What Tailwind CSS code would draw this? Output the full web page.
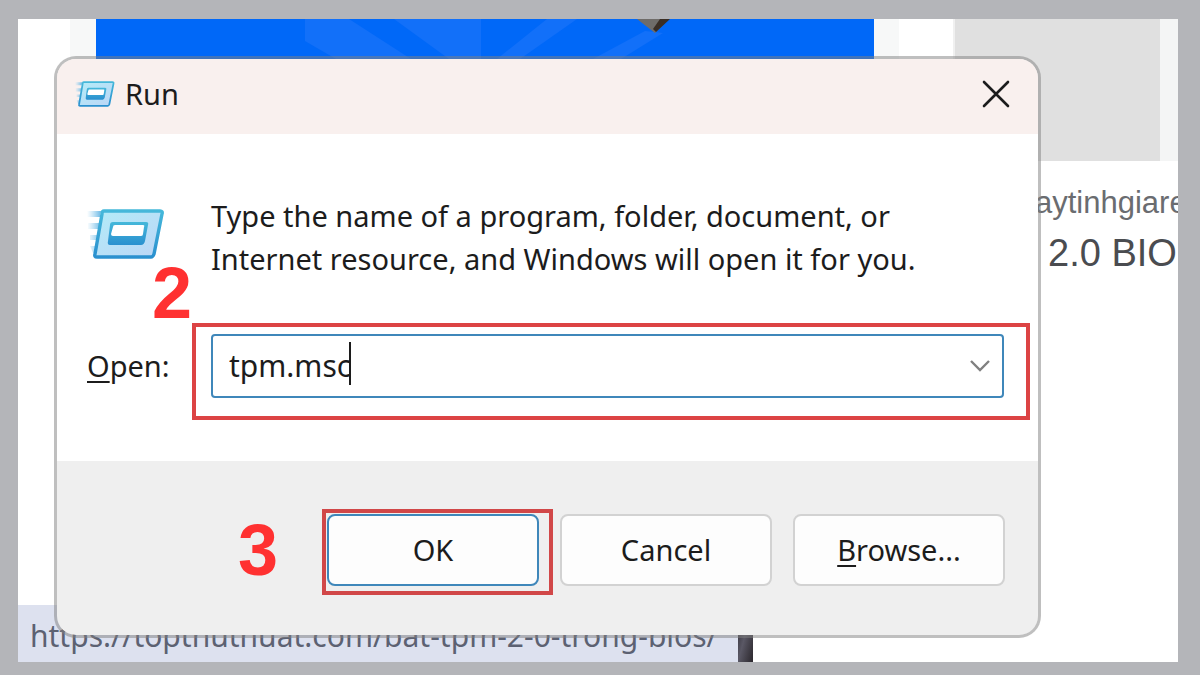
<!DOCTYPE html>
<html lang="en">
<head>
  <meta charset="UTF-8" />
  <meta name="viewport" content="width=device-width, initial-scale=1.0"/>
  <title>Run</title>
  <script src="https://cdn.jsdelivr.net/npm/@tailwindcss/browser@4"></script>
</head>
<body class="flex min-h-screen bg-[#b4b5b9] pt-[19px] pr-[22px] pb-[13px] pl-[18px] font-['Noto_Sans','Open_Sans',sans-serif] text-[#1c1c1c]">

  <div class="relative flex flex-1 overflow-hidden bg-white">

    <!-- Page behind the dialog -->
    <main class="flex-1 pl-[52px] pr-[54px]">
      <div class="h-40 bg-[#f7f8f8] pl-[26px] pr-[25px]">
        <svg class="block h-full w-full bg-[#0068f8]" viewBox="0 0 778 160" preserveAspectRatio="none" aria-hidden="true">
          <path d="M209 0h44l62 40h-75l-31-18z" fill="#1270f9"/>
          <path d="M298 0h87v40h-32z" fill="#1270f9"/>
          <path d="M401 40l50-40h30l-57 40z" fill="#1270f9"/>
          <path d="M497 40l52-28 18 2-42 26z" fill="#1270f9"/>
          <path d="M541 0h32l-14 14z" fill="#6f6c69"/>
          <path d="M564 0h10l-14 13-3-3z" fill="#3a2e25"/>
        </svg>
      </div>
    </main>

    <aside class="w-[225px] font-['Liberation_Sans',Arial,sans-serif]">
      <div class="flex h-[142px]">
        <div class="flex-1 border-l-2 border-[#f0f0f0] bg-[#e0e0e0]"></div>
        <div class="w-[18px] bg-[#f4f5f5]"></div>
      </div>
      <p class="mt-6 pl-[82px] text-[31px] leading-9 whitespace-nowrap text-[#6a6c70]">aytinhgiare</p>
      <p class="mt-3 pl-[95px] text-[38px] leading-10 whitespace-nowrap text-[#4a4c50]">2.0 BIO</p>
    </aside>

    <!-- Link preview -->
    <div class="absolute bottom-0 left-0 flex h-[57px]">
      <div class="w-[720px] bg-[#dde1ef] pt-2 pl-3 text-3xl leading-[45px] whitespace-nowrap text-[#5c6172]">https://topthuthuat.com/bat-tpm-2-0-trong-bios/</div>
      <div class="w-[15px] bg-linear-to-br from-[#25222a] via-[#5a5865] to-[#2b272d]"></div>
    </div>

    <!-- Run dialog -->
    <section role="dialog" aria-labelledby="title" class="absolute top-[37px] right-[137px] left-9 overflow-hidden rounded-[22px] border-3 border-[#808080]/50 bg-[#efefef] bg-clip-padding">
      <header class="flex h-[75px] items-center bg-[#f9f0ee] pr-7 pb-[5px] pl-[18px]">
        <svg class="h-7 w-10" viewBox="0 0 78 52" aria-hidden="true">
          <use href="#run-icon"/>
        </svg>
        <h1 id="title" class="ml-[10px] flex-1 text-[29px]">Run</h1>
        <button type="button" aria-label="Close">
          <svg class="size-7" viewBox="0 0 28 28" fill="none" stroke="#1c1c1c" stroke-width="2.6" stroke-linecap="round">
            <path d="M2 2l24 24M26 2L2 26"/>
          </svg>
        </button>
      </header>

      <div class="relative grid grid-cols-[124px_1fr] gap-y-[54px] bg-white pt-[60px] pr-[34px] pb-[63px] pl-[30px]">
        <svg class="mt-[14px] h-[52px] w-[78px]" viewBox="0 0 78 52" aria-hidden="true">
          <defs>
            <linearGradient id="edge" x1="0" y1="0" x2="0" y2="1">
              <stop offset="0" stop-color="#45b8da"/>
              <stop offset="1" stop-color="#2a90cf"/>
            </linearGradient>
            <linearGradient id="face" x1="0" y1="0" x2="1" y2="1">
              <stop offset="0" stop-color="#b3ecf8"/>
              <stop offset="1" stop-color="#bcd5f6"/>
            </linearGradient>
            <linearGradient id="trail" x1="0" y1="0" x2="1" y2="0">
              <stop offset="0" stop-color="#8fcdf0" stop-opacity="0"/>
              <stop offset="1" stop-color="#6bb8e4"/>
            </linearGradient>
          </defs>
          <g id="run-icon">
            <path d="M0 3h14l-1 6H0zM1 15h12l-1 6H1zM3 27h8l-1 5H3zM3 38h6l-1 7H6z" fill="url(#trail)"/>
            <path d="M17 3h56q3 0 2 3l-8 40q-1 3-3 3H10q-3 0-2-3l7-40q0-3 2-3z" fill="url(#face)" stroke="url(#edge)" stroke-width="3.4"/>
            <path d="M26 14h33q3 0 2 3l-3 16q-1 4-4 4H23q-3 0-2-4l2-16q0-3 3-3z" fill="url(#edge)"/>
            <path d="M28 17h28q2 0 1 2l-1 7q0 2-2 2H26q-2 0-2-2l2-7q0-2 2-2z" fill="#fff"/>
          </g>
        </svg>
        <p class="text-[29px] leading-[43px]">Type the name of a program, folder, document, or<br>Internet resource, and Windows will open it for you.</p>

        <label for="open" class="self-center text-[29px]"><u class="decoration-2 underline-offset-4">O</u>pen:</label>
        <div class="relative flex h-16 items-center rounded-sm border-2 border-[#3f87ba] bg-white pr-3 pl-4">
          <input id="open" type="text" value="tpm.msc" spellcheck="false" class="min-w-0 flex-1 text-3xl outline-none">
          <button type="button" aria-label="Show history">
            <svg class="h-3 w-5" viewBox="0 0 20 12" fill="none" stroke="#808080" stroke-width="2.4">
              <path d="M1 1l9 9 9-9"/>
            </svg>
          </button>
          <span class="absolute top-[6px] left-[136px] h-[43px] w-[2px] bg-[#1c1c1c]"></span>
          <div class="pointer-events-none absolute -top-[13px] -right-7 -bottom-6 -left-[21px] border-4 border-[#dc4344]"></div>
        </div>

        <span class="absolute top-[123px] left-[95px] font-['Liberation_Sans',Arial,sans-serif] text-7xl font-bold text-[#ff3131]">2</span>
      </div>

      <footer class="flex items-center justify-end gap-[21px] pt-[53px] pr-[33px] pb-[49px]">
        <span class="pr-7 font-['Liberation_Sans',Arial,sans-serif] text-7xl leading-[72px] font-bold text-[#ff3131]">3</span>
        <div class="relative">
          <button type="button" class="h-[72px] w-53 rounded-lg border-2 border-[#3f87ba] bg-[#fdfdfd] text-[29px]">OK</button>
          <div class="pointer-events-none absolute -top-[5px] -right-[14px] -bottom-[9px] -left-[5px] border-4 border-[#d14748]"></div>
        </div>
        <button type="button" class="h-[72px] w-53 rounded-lg border-2 border-[#d2d2d2] bg-[#fdfdfd] text-[29px]">Cancel</button>
        <button type="button" class="h-[72px] w-53 rounded-lg border-2 border-[#d2d2d2] bg-[#fdfdfd] text-[29px]"><u class="decoration-2 underline-offset-4">B</u>rowse...</button>
      </footer>
    </section>

  </div>

</body>
</html>
